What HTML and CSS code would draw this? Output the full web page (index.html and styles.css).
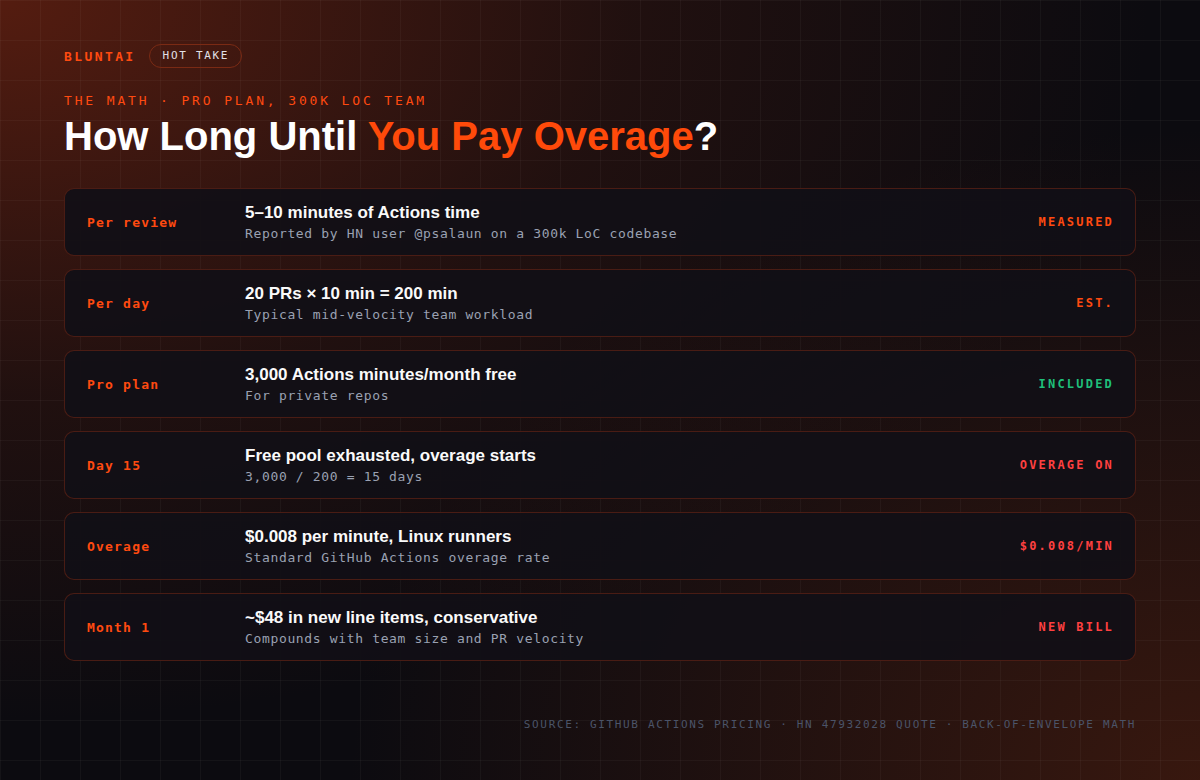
FILE: index.html
```html
<!DOCTYPE html>
<html lang="en">
<head>
<meta charset="utf-8">
<title>How Long Until You Pay Overage?</title>
<link rel="stylesheet" href="styles.css">
</head>
<body>
<div class="page">
  <header class="brand-row">
    <span class="brand">BLUNTAI</span>
    <span class="pill">HOT TAKE</span>
  </header>
  <p class="eyebrow">THE MATH · PRO PLAN, 300K LOC TEAM</p>
  <h1 class="title">How Long Until <span class="hl">You Pay Overage</span>?</h1>

  <ul class="rows">
    <li class="row">
      <span class="label">Per review</span>
      <div class="main">
        <span class="main-title">5–10 minutes of Actions time</span>
        <span class="main-sub">Reported by HN user @psalaun on a 300k LoC codebase</span>
      </div>
      <span class="tag tag-orange">MEASURED</span>
    </li>
    <li class="row">
      <span class="label">Per day</span>
      <div class="main">
        <span class="main-title">20 PRs × 10 min = 200 min</span>
        <span class="main-sub">Typical mid-velocity team workload</span>
      </div>
      <span class="tag tag-orange">EST.</span>
    </li>
    <li class="row">
      <span class="label">Pro plan</span>
      <div class="main">
        <span class="main-title">3,000 Actions minutes/month free</span>
        <span class="main-sub">For private repos</span>
      </div>
      <span class="tag tag-green">INCLUDED</span>
    </li>
    <li class="row">
      <span class="label">Day 15</span>
      <div class="main">
        <span class="main-title">Free pool exhausted, overage starts</span>
        <span class="main-sub">3,000 / 200 = 15 days</span>
      </div>
      <span class="tag tag-red">OVERAGE ON</span>
    </li>
    <li class="row">
      <span class="label">Overage</span>
      <div class="main">
        <span class="main-title">$0.008 per minute, Linux runners</span>
        <span class="main-sub">Standard GitHub Actions overage rate</span>
      </div>
      <span class="tag tag-red">$0.008/MIN</span>
    </li>
    <li class="row">
      <span class="label">Month 1</span>
      <div class="main">
        <span class="main-title">~$48 in new line items, conservative</span>
        <span class="main-sub">Compounds with team size and PR velocity</span>
      </div>
      <span class="tag tag-red">NEW BILL</span>
    </li>
  </ul>

  <footer class="source">SOURCE: GITHUB ACTIONS PRICING · HN 47932028 QUOTE · BACK-OF-ENVELOPE MATH</footer>
</div>
</body>
</html>
```

FILE: styles.css
```css
* { box-sizing: border-box; }
html, body { margin: 0; padding: 0; }
body {
  width: 1200px;
  height: 780px;
  overflow: hidden;
  background-color: #0c0b10;
  background-image:
    linear-gradient(rgba(255,255,255,0.035) 1px, transparent 1px),
    linear-gradient(90deg, rgba(255,255,255,0.035) 1px, transparent 1px),
    radial-gradient(ellipse 1150px 720px at 0% 0%, rgba(125,38,16,0.64), rgba(80,28,14,0.3) 55%, rgba(12,11,16,0) 100%),
    radial-gradient(ellipse 850px 650px at 100% 100%, rgba(85,32,14,0.6), rgba(12,11,16,0) 100%);
  background-size: 40px 40px, 40px 40px, 100% 100%, 100% 100%;
  font-family: "Liberation Sans", Arial, sans-serif;
  color: #fff;
}
.page {
  padding: 44px 64px 0 64px;
  display: flex;
  flex-direction: column;
}
.brand-row {
  display: flex;
  align-items: center;
  gap: 13px;
  height: 24px;
}
.brand {
  font-family: "DejaVu Sans Mono", monospace;
  font-weight: bold;
  font-size: 13px;
  letter-spacing: 2.4px;
  color: #ff4a10;
}
.pill {
  font-family: "DejaVu Sans Mono", monospace;
  font-size: 11px;
  letter-spacing: 1.7px;
  color: #e2e0e6;
  border: 1px solid #7a2a14;
  border-radius: 12px;
  height: 24px;
  line-height: 22px;
  padding: 0 12px 0 13px;
}
.eyebrow {
  margin: 25px 0 0 0;
  font-family: "DejaVu Sans Mono", monospace;
  font-size: 13px;
  letter-spacing: 2.85px;
  color: #ff4a10;
  line-height: 16px;
}
.title {
  margin: 4px 0 0 0;
  font-size: 40px;
  line-height: 46px;
  font-weight: bold;
  letter-spacing: 0;
  color: #fff;
}
.hl { color: #ff4a0a; }
.rows {
  list-style: none;
  margin: 29px 0 0 0;
  padding: 0;
  display: flex;
  flex-direction: column;
  gap: 13px;
}
.row {
  height: 68px;
  display: flex;
  align-items: center;
  padding: 0 23px 0 22px;
  background: rgba(17,15,21,0.93);
  border: 1px solid rgba(120,40,20,0.55);
  border-radius: 10px;
}
.label {
  width: 158px;
  flex: none;
  font-family: "DejaVu Sans Mono", monospace;
  font-weight: bold;
  font-size: 13px;
  letter-spacing: 1.2px;
  color: #ff4a10;
}
.main {
  flex: 1;
  display: flex;
  flex-direction: column;
  gap: 3px;
  padding-top: 1px;
}
.main-title {
  font-size: 17px;
  font-weight: bold;
  line-height: 20px;
  color: #fafafa;
}
.main-sub {
  font-family: "DejaVu Sans Mono", monospace;
  font-size: 13px;
  letter-spacing: 0.65px;
  line-height: 16px;
  color: #9aa1b2;
}
.tag {
  font-family: "DejaVu Sans Mono", monospace;
  font-weight: bold;
  font-size: 12px;
  letter-spacing: 2.2px;
  margin-right: -2px;
}
.tag-orange { color: #ff4a10; }
.tag-green { color: #1fbf7a; }
.tag-red { color: #ff4040; }
.source {
  margin-top: 57px;
  align-self: flex-end;
  font-family: "DejaVu Sans Mono", monospace;
  font-size: 11px;
  letter-spacing: 1.65px;
  color: #4b5468;
}
```
